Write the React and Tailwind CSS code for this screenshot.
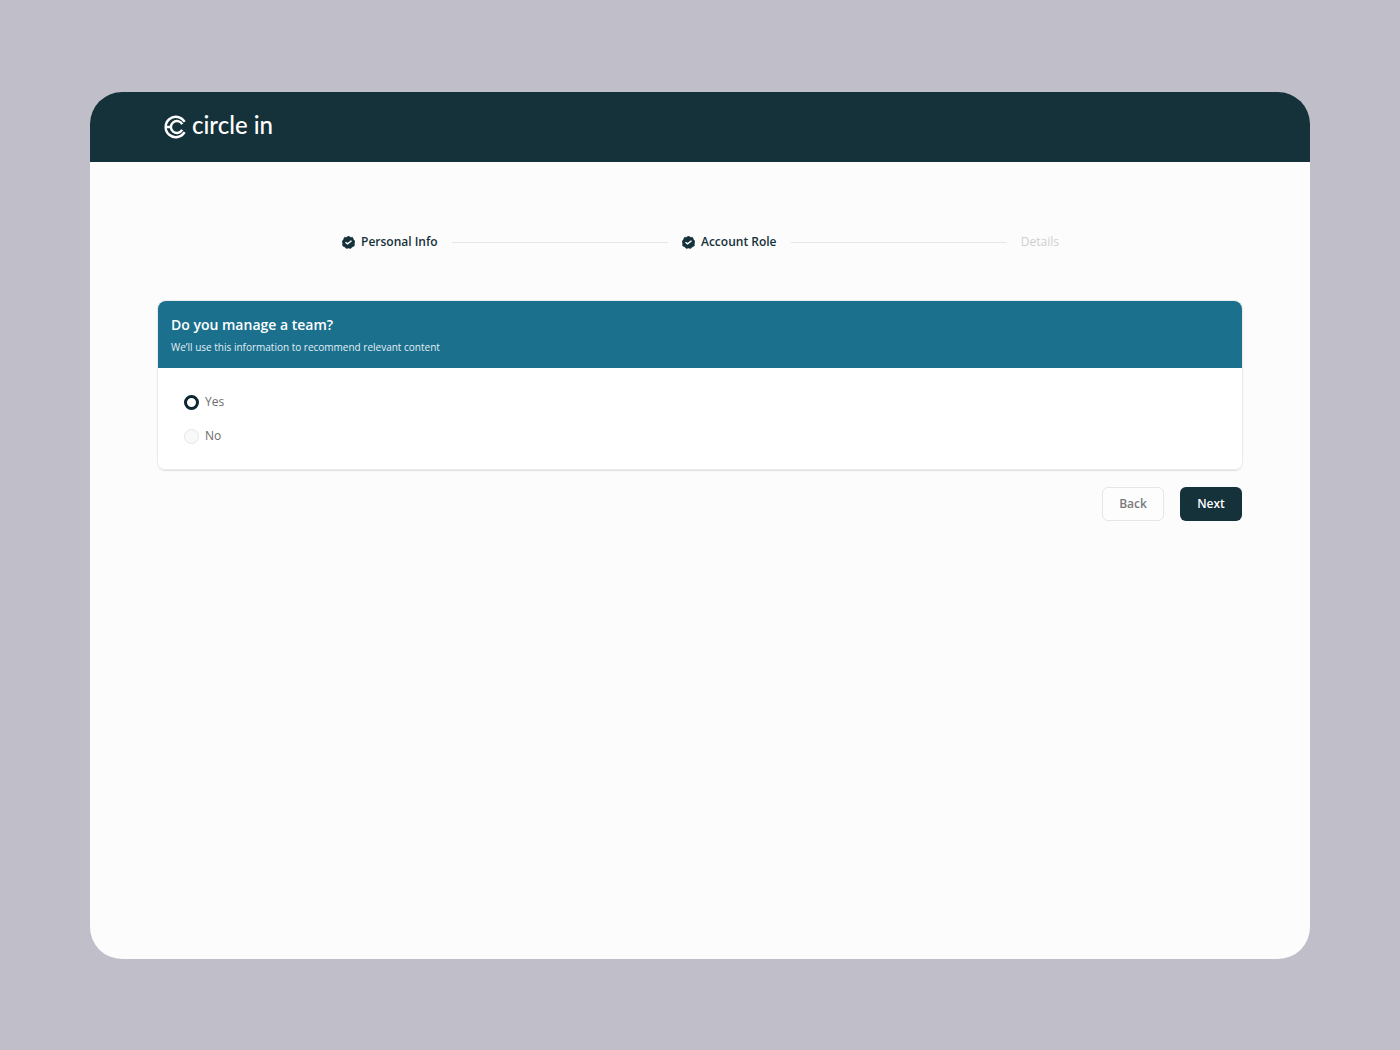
import React, { useState } from 'react';

const steps = [
  { label: 'Personal Info', done: true },
  { label: 'Account Role', done: true },
  { label: 'Details', done: false },
];

const Logo = () => (
  <a href="#" className="flex items-center gap-1.5 text-white">
    <svg className="w-[22px] h-6" viewBox="0 0 22 24" fill="none" stroke="currentColor" strokeWidth="2.4">
      <path d="M20.6 6.8A10.2 10.2 0 1 0 20.6 17.2" />
      <path d="M18.2 9.2A6 6 0 1 0 18.2 14.8" />
      <path d="M1.4 12H7" />
    </svg>
    <span className="font-['Lato',sans-serif] text-2xl leading-6 pb-1 font-medium">circle in</span>
  </a>
);

const DoneBadge = () => (
  <svg className="w-[13px] h-[13px]" viewBox="0 0 26 26" aria-hidden="true">
    <path
      d="M13 0L16.8 2.6L21.4 2.8L23 7.2L26 10.8L24.8 15.2L24.6 19.8L20.4 21.8L17.4 25.2L13 24.2L8.6 25.2L5.6 21.8L1.4 19.8L1.2 15.2L0 10.8L3 7.2L4.6 2.8L9.2 2.6Z"
      fill="#15313a"
      stroke="#15313a"
      strokeLinejoin="round"
    />
    <path d="M7 12.5L11.2 15.8L19 9.5" fill="none" stroke="#fff" strokeWidth="3" />
  </svg>
);

const Stepper = () => (
  <ol className="flex items-center pl-[185px] pr-[184px]">
    {steps.map((step, index) => (
      <React.Fragment key={step.label}>
        {index > 0 && <li aria-hidden="true" className="h-px flex-1 mx-3.5 bg-[#e6e6e6]" />}
        <li
          className={`flex items-center gap-1.5 text-xs leading-4 ${
            step.done ? 'font-semibold text-[#15313a]' : 'text-[#cfcfcf]'
          }`}
        >
          {step.done && <DoneBadge />}
          {step.label}
        </li>
      </React.Fragment>
    ))}
  </ol>
);

const RadioOption = ({ label, checked, onChange }) => (
  <label className="flex items-center gap-1.5 text-xs leading-[18px] text-[#6b6b6b] cursor-pointer">
    <input
      type="radio"
      name="managesTeam"
      checked={checked}
      onChange={onChange}
      className="appearance-none w-[15px] h-[15px] rounded-full border border-[#e6e6e6] bg-[#f9f9f9] checked:border-[3px] checked:border-[#0b2730] checked:bg-white"
    />
    {label}
  </label>
);

const App = () => {
  const [answer, setAnswer] = useState('Yes');

  return (
    <div className="min-h-screen flex flex-col bg-[#c0bec9] px-[90px] pt-[92px] pb-[91px] font-['Open_Sans',sans-serif]">
      <div className="flex-1 rounded-[32px] overflow-hidden bg-[#fcfcfc]">
        <header className="h-[70px] flex items-center px-[74px] bg-[#15313a]">
          <Logo />
        </header>

        <main className="px-[67px] pt-[72px]">
          <Stepper />

          <form onSubmit={(e) => e.preventDefault()} className="mt-[50px]">
            <fieldset className="rounded-lg overflow-hidden bg-white border border-[#ececec] shadow-[0_1px_1px_rgba(0,0,0,0.12)]">
              <div className="bg-[#1b708e] px-[13px] pt-3.5 pb-3 text-white">
                <h1 className="text-sm leading-5 font-semibold">Do you manage a team?</h1>
                <p className="mt-1 text-[10px] leading-[17px] text-[#e3eff3]">
                  We’ll use this information to recommend relevant content
                </p>
              </div>

              <div className="flex flex-col gap-4 px-[26px] pt-[25px] pb-6">
                {['Yes', 'No'].map((option) => (
                  <RadioOption
                    key={option}
                    label={option}
                    checked={answer === option}
                    onChange={() => setAnswer(option)}
                  />
                ))}
              </div>
            </fieldset>

            <div className="mt-[17px] pr-px flex justify-end gap-4">
              <button
                type="button"
                className="w-[62px] h-[34px] rounded-md border border-[#e6e6e6] bg-[#fdfdfd] text-xs font-semibold text-[#7a7a7a] cursor-pointer"
              >
                Back
              </button>
              <button
                type="submit"
                className="w-[62px] h-[34px] rounded-md bg-[#15313a] text-xs font-semibold text-white cursor-pointer"
              >
                Next
              </button>
            </div>
          </form>
        </main>
      </div>
    </div>
  );
};

export default App;
